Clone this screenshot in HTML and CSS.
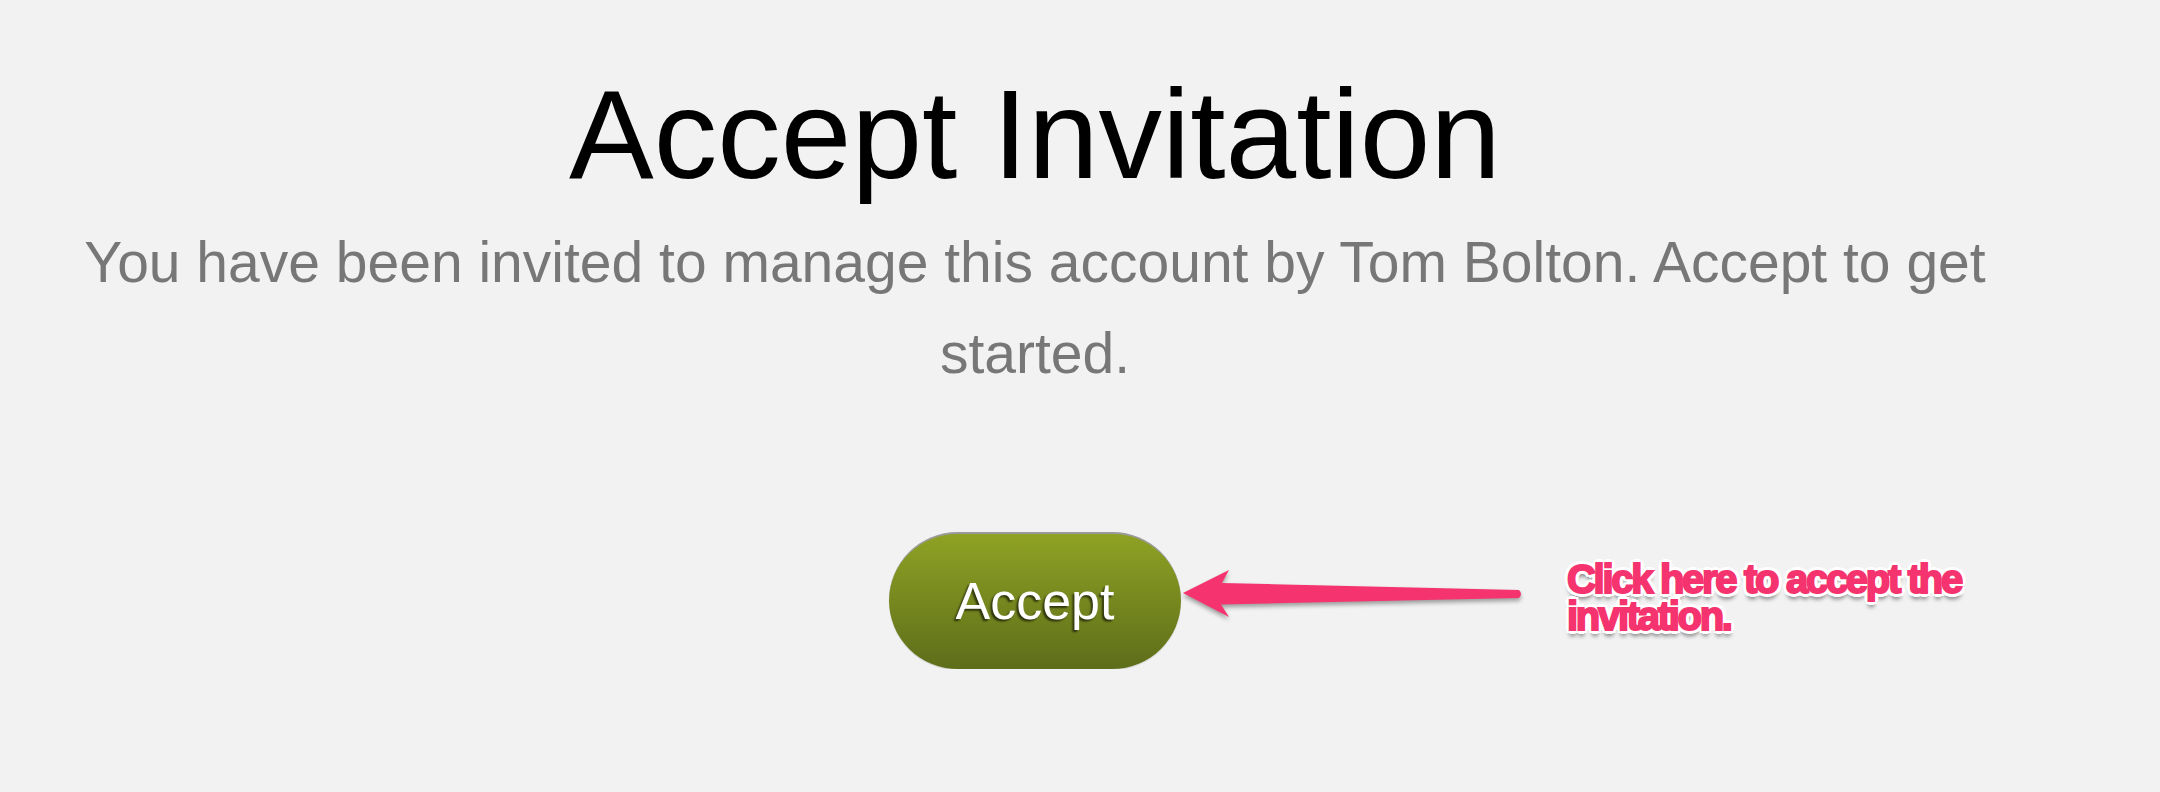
FILE: index.html
```html
<!DOCTYPE html>
<html lang="en">
<head>
    <meta charset="UTF-8">
    <meta name="viewport" content="width=device-width, initial-scale=1.0">
    <title>Accept Invitation</title>
    <link rel="stylesheet" href="styles.css">
</head>
<body>
    <div class="container">
        <h1>Accept Invitation</h1>
        <p class="intro">You have been invited to manage this account by Tom Bolton. Accept to get started.</p>

        <div class="actions">
            <button class="btn-accept">Accept</button>

            <!-- anotação sobre o botão -->
            <svg class="callout-arrow" width="360" height="70" viewBox="0 0 360 70">
                <path d="M13 33 L59 10 L52 23 L349 30 Q353 34 349 38 L51 44.5 L59 57 Z" fill="#f5336e"/>
            </svg>
            <div class="callout-text">Click here to accept the invitation.</div>
        </div>
    </div>
</body>
</html>
```

FILE: styles.css
```css
body {
    font-family: "Liberation Sans", Arial, Helvetica, sans-serif;
    background-color: #f2f2f2;
    margin: 0;
    padding: 72px 0 0 0;
}

.container {
    width: 1960px;
    margin-left: 55px;
    text-align: center;
}

h1 {
    font-size: 127px;
    font-weight: normal;
    line-height: 125px;
    color: #000;
    margin: 0;
}

.intro {
    font-size: 57px;
    line-height: 91px;
    color: #777;
    margin: 20px 0 0 0;
}

.actions {
    position: relative;
    display: flex;
    justify-content: center;
    margin-top: 133px;
}

.btn-accept {
    width: 292px;
    height: 137px;
    border: none;
    border-top: 2px solid #9a9a9a;
    border-radius: 70px;
    background: linear-gradient(#8fa224, #5d6d1a);
    color: #fff;
    font-family: inherit;
    font-size: 52px;
    line-height: 133px;
    padding: 0;
    text-shadow: -2px 2px 2px rgba(0, 0, 0, 0.6);
    box-shadow: 0 1px 1px rgba(0, 0, 0, 0.15);
    cursor: pointer;
}

.callout-arrow {
    position: absolute;
    left: 1115px;
    top: 28px;
    filter: drop-shadow(0 3px 2px rgba(0, 0, 0, 0.35));
}

.callout-text {
    position: absolute;
    left: 1512px;
    top: 29px;
    width: 430px;
    text-align: left;
    font-size: 40px;
    font-weight: bold;
    line-height: 37px;
    letter-spacing: -2.3px;
    color: #f5336e;
    -webkit-text-stroke: 2px #f5336e;
    text-shadow:
        4px 0 0 #fff, -4px 0 0 #fff, 0 4px 0 #fff, 0 -4px 0 #fff,
        3px 3px 0 #fff, -3px 3px 0 #fff, 3px -3px 0 #fff, -3px -3px 0 #fff,
        0 6px 4px rgba(0, 0, 0, 0.5);
}
```
